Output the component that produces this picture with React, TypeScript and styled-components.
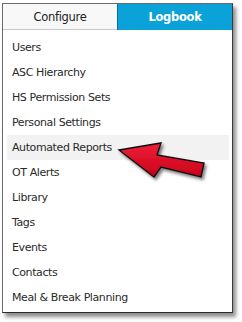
import * as React from "react";
import styled, { createGlobalStyle } from "styled-components";

const GlobalStyle = createGlobalStyle`
  html, body {
    margin: 0;
    padding: 0;
    background: #ffffff;
  }
  body {
    font-family: "DejaVu Sans", Verdana, sans-serif;
  }
`;

const Page = styled.div`
  position: relative;
  width: 242px;
  height: 322px;
  padding: 3px 0 0 2px;
  box-sizing: border-box;
`;

const Panel = styled.div`
  width: 231px;
  height: 310px;
  box-sizing: border-box;
  border: 1px solid #6a6a6a;
  border-right-color: #3a3a3a;
  border-bottom-color: #2a2a2a;
  background: #fff;
  box-shadow: 3px 4px 4px rgba(0, 0, 0, 0.45);
  display: flex;
  flex-direction: column;
`;

const Tabs = styled.div`
  display: flex;
  height: 26px;
  flex: none;
`;

const Tab = styled.div<{ active?: boolean }>`
  display: flex;
  align-items: center;
  justify-content: center;
  box-sizing: border-box;
  font-size: 11.5px;
  letter-spacing: -0.3px;
  ${({ active }) =>
    active
      ? `
    flex: 1;
    background: #0aa2d8;
    color: #fff;
    font-weight: bold;
    border-left: 1px solid #0a6e98;
  `
      : `
    width: 114px;
    background: #f8f8f8;
    color: #222;
    border-bottom: 1px solid #c8c8c8;
  `}
`;

const List = styled.ul`
  list-style: none;
  margin: 0;
  padding: 5px 3px 0 4px;
`;

const Item = styled.li<{ hover?: boolean }>`
  height: 25px;
  display: flex;
  align-items: center;
  padding-left: 5px;
  font-size: 11px;
  letter-spacing: -0.4px;
  color: #2a2a2a;
  background: ${({ hover }) => (hover ? "#f2f2f2" : "transparent")};
`;

const Arrow = styled.svg`
  position: absolute;
  left: 0;
  top: 0;
  pointer-events: none;
`;

const items = [
  "Users",
  "ASC Hierarchy",
  "HS Permission Sets",
  "Personal Settings",
  "Automated Reports",
  "OT Alerts",
  "Library",
  "Tags",
  "Events",
  "Contacts",
  "Meal & Break Planning",
];

export default function App() {
  return (
    <>
      <GlobalStyle />
      <Page>
        <Panel>
          <Tabs>
            <Tab>Configure</Tab>
            <Tab active>Logbook</Tab>
          </Tabs>
          <List>
            {items.map((name) => (
              <Item key={name} hover={name === "Automated Reports"}>
                {name}
              </Item>
            ))}
          </List>
        </Panel>
        <Arrow width="242" height="322" viewBox="0 0 242 322">
          <defs>
            <linearGradient id="red" x1="0" y1="0" x2="0" y2="1">
              <stop offset="0" stopColor="#f0203a" />
              <stop offset="1" stopColor="#c80018" />
            </linearGradient>
            <filter id="sh" x="-20%" y="-20%" width="140%" height="160%">
              <feDropShadow dx="2" dy="2.5" stdDeviation="1.6" floodColor="#000" floodOpacity="0.5" />
            </filter>
          </defs>
          <polygon
            points="119,150 161,143 157,155 204,163 201,177 161,167 154,177"
            fill="url(#red)"
            stroke="#111"
            strokeWidth="1.4"
            strokeLinejoin="miter"
            filter="url(#sh)"
          />
        </Arrow>
      </Page>
    </>
  );
}
